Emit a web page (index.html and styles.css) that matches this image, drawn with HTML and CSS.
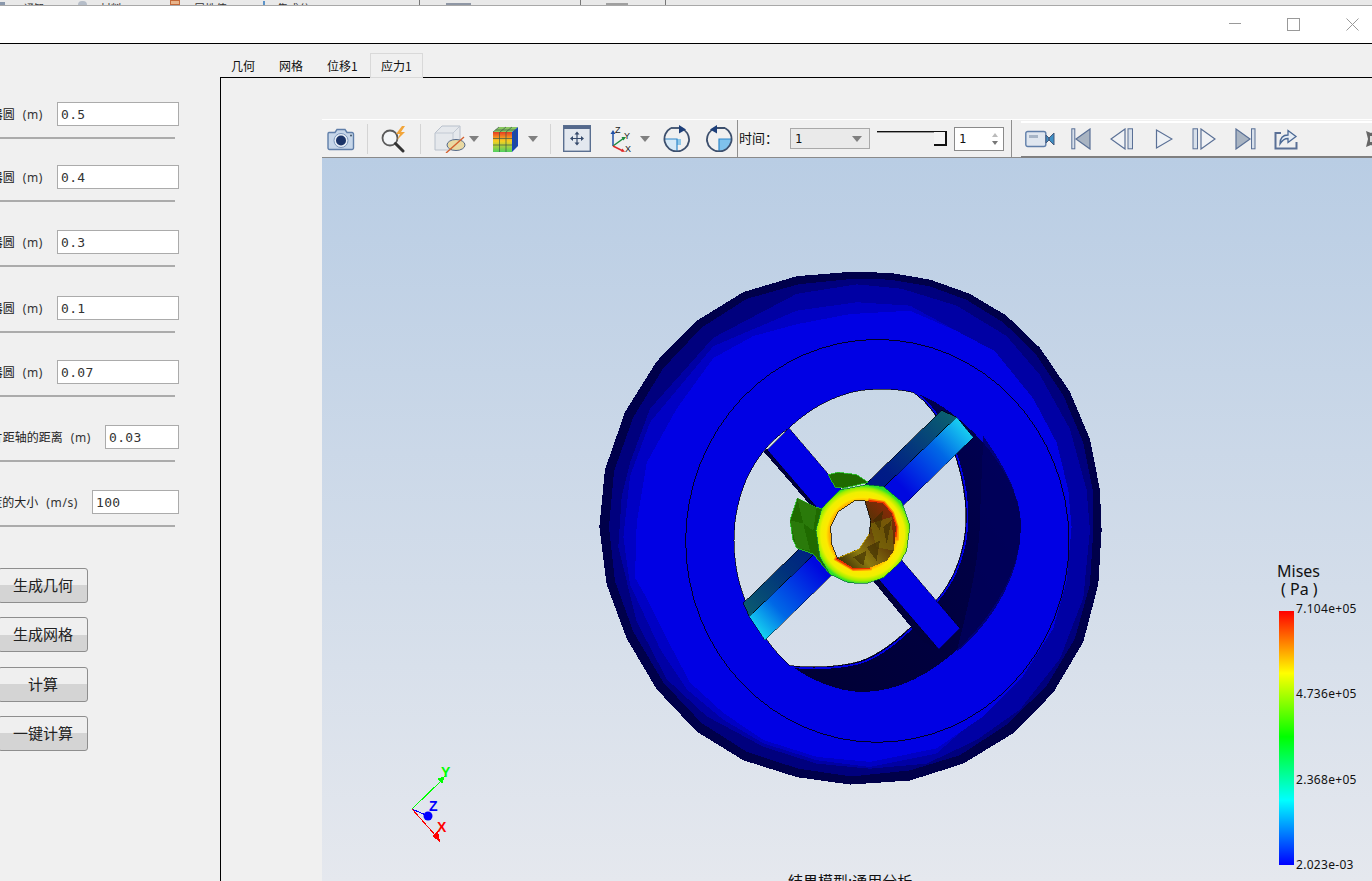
FILE: index.html
```html
<!DOCTYPE html>
<html lang="zh">
<head>
<meta charset="utf-8">
<title>应力</title>
<link rel="stylesheet" href="styles.css">
</head>
<body>
<div class="app">
  <div class="strip">
    <span class="sq sq-blue"></span><span class="cut c1">通知</span>
    <span class="dot"></span><span class="cut c2">材料</span>
    <span class="sq sq-orange"></span><span class="cut c3">属性值</span>
    <span class="tick"></span><span class="cut c4">集成分</span>
    <span class="vbar vb1"></span><span class="blk b1"></span>
    <span class="vbar vb2"></span><span class="blk b2"></span>
    <span class="vbar vb3"></span>
  </div>

  <header class="titlebar">
    <svg class="winbtn w-min" width="12" height="12" viewBox="0 0 12 12"><path d="M0 5.500H12" stroke="#999" stroke-width="1"/></svg>
    <svg class="winbtn w-max" width="13" height="13" viewBox="0 0 13 13"><rect x=".5" y=".5" width="12" height="12" fill="none" stroke="#999"/></svg>
    <svg class="winbtn w-close" width="13" height="13" viewBox="0 0 13 13"><path d="M.5.5L12.500 12.500M12.500.5L.5 12.500" stroke="#999" fill="none"/></svg>
  </header>

  <main class="main">
    <aside class="side">
      <div class="fields">
        <div class="field"><div class="frow"><span class="lbl">外器圆<span class="unit">(m)</span></span><div class="input in122">0.5</div></div><div class="rule"></div></div>
        <div class="field"><div class="frow"><span class="lbl">外器圆<span class="unit">(m)</span></span><div class="input in122">0.4</div></div><div class="rule"></div></div>
        <div class="field"><div class="frow"><span class="lbl">内器圆<span class="unit">(m)</span></span><div class="input in122">0.3</div></div><div class="rule"></div></div>
        <div class="field"><div class="frow"><span class="lbl">内器圆<span class="unit">(m)</span></span><div class="input in122">0.1</div></div><div class="rule"></div></div>
        <div class="field"><div class="frow"><span class="lbl">内器圆<span class="unit">(m)</span></span><div class="input in122">0.07</div></div><div class="rule"></div></div>
        <div class="field"><div class="frow"><span class="lbl">叶片距轴的距离<span class="unit">(m)</span></span><div class="input in74">0.03</div></div><div class="rule"></div></div>
        <div class="field"><div class="frow"><span class="lbl">速度的大小<span class="unit">(m/s)</span></span><div class="input in87">100</div></div><div class="rule"></div></div>
      </div>
      <div class="btns">
        <button class="btn">生成几何</button>
        <button class="btn">生成网格</button>
        <button class="btn">计算</button>
        <button class="btn">一键计算</button>
      </div>
    </aside>

    <section class="work">
      <nav class="tabs">
        <span class="tab t48">几何</span>
        <span class="tab t48">网格</span>
        <span class="tab t54">位移1</span>
        <span class="tab t53 active">应力1</span>
      </nav>
      <div class="pane">
        <div class="view">
          <div class="toolbar">
            <svg class="ic m5" width="28" height="26" viewBox="0 0 28 26"><path d="M2 6.500h6l2-3h8l2 3h5a1.500 1.500 0 0 1 1.500 1.500v14a1.500 1.500 0 0 1-1.500 1.500H2.500A1.500 1.500 0 0 1 1 22V8a1.500 1.500 0 0 1 1-1.500z" fill="#c6d6e9" stroke="#5f7ea9" stroke-width="1.400"/><circle cx="14" cy="14.500" r="7" fill="#e7eef6" stroke="#7d97bb"/><circle cx="14" cy="14.500" r="5" fill="#1b3468"/><circle cx="24" cy="9.500" r="1" fill="#456"/></svg>
            <span class="sep m12"></span>
            <svg class="ic m12" width="28" height="28" viewBox="0 0 28 28"><circle cx="10" cy="13" r="7.500" fill="#f4f6f8" stroke="#5b5b5b" stroke-width="1.800"/><path d="M15.500 18.500L23 26" stroke="#333" stroke-width="3" stroke-linecap="round"/><path d="M22 1l-6 8h4l-3 6 8-8h-4l4-6z" fill="#f2a53a"/></svg>
            <span class="sep m12"></span>
            <svg class="ic m12" width="33" height="28" viewBox="0 0 33 28"><path d="M2 8L9 1h18v17l-7 7H2z" fill="#e5e8ec" stroke="#b8c0cb"/><path d="M2 8h18v17M20 8l7-7" fill="none" stroke="#c2c9d3"/><ellipse cx="23" cy="20" rx="9" ry="5.500" fill="#e9d9a2" stroke="#54698a"/><path d="M13 28L31 12" stroke="#d4602e" stroke-width="1.400"/></svg>
            <svg class="ic arrow m3" width="10" height="6" viewBox="0 0 10 6"><path d="M0 0h10L5 6z" fill="#808080"/></svg>
            <svg class="ic m13" width="27" height="28" viewBox="0 0 27 28"><defs><linearGradient id="ru" x1="0" y1="0" x2="0" y2="1"><stop offset="0" stop-color="#e83a22"/><stop offset=".45" stop-color="#f8cf20"/><stop offset="1" stop-color="#4fd060"/></linearGradient></defs><path d="M1 7L7 2h19l-6 5z" fill="#8bc860"/><path d="M20 7l6-5v19l-6 6z" fill="#1746b8"/><rect x="1" y="7" width="19" height="20" fill="url(#ru)"/><path d="M7.500 7v20M14 7v20M1 13.500h19M1 20h19M7 2L1 7M14 2L8 7M20 2l-6 5M3.500 5h19M23 4v19" stroke="#3b5a4a" stroke-width=".7" fill="none"/></svg>
            <svg class="ic arrow m9" width="10" height="6" viewBox="0 0 10 6"><path d="M0 0h10L5 6z" fill="#808080"/></svg>
            <span class="sep m12"></span>
            <svg class="ic m12" width="28" height="27" viewBox="0 0 28 27"><rect x=".7" y=".7" width="26.600" height="25.600" fill="#e3e8ef" stroke="#5a6f90" stroke-width="1.400"/><rect x="1" y="1" width="26" height="3" fill="#55698c"/><path d="M14 8v11M8.500 13.500h11" stroke="#34496b" stroke-width="1.200"/><path d="M14 6.500l2.500 3h-5zM14 20.500l2.500-3h-5zM7 13.500l3-2.500v5zM21 13.500l-3-2.500v5z" fill="#34496b"/></svg>
            <svg class="ic m16" width="26" height="28" viewBox="0 0 26 28"><path d="M6 21V8" stroke="#2150a8" stroke-width="1.500"/><path d="M6 5l2.500 4h-5z" fill="#2150a8"/><path d="M6 21L17 13" stroke="#1d8a3c" stroke-width="1.500"/><path d="M19 12l-4.500 0 2 3.500z" fill="#1d8a3c"/><path d="M6 21l10 5" stroke="#e02a2a" stroke-width="1.500"/><path d="M18 27l-4-.5 1.500-3z" fill="#e02a2a"/><text x="8" y="8" class="axt">Z</text><text x="17" y="14" class="axt">Y</text><text x="18" y="27" class="axt">X</text></svg>
            <svg class="ic arrow m7" width="10" height="6" viewBox="0 0 10 6"><path d="M0 0h10L5 6z" fill="#808080"/></svg>
            <svg class="ic m13" width="28" height="27" viewBox="0 0 28 27"><path d="M2 14h12v12a12 12 0 0 1-12-12z" fill="#d5e9f7"/><path d="M14 14h4v6h-4z" fill="#8ec8ea"/><path d="M1.500 14h12.500v12.500" fill="none" stroke="#2e86c9" stroke-width="1.200"/><path d="M14 26.500A12.500 12.500 0 0 1 8 3M18 3a12.500 12.500 0 0 1 8 13A12.500 12.500 0 0 1 14 26.500" fill="none" stroke="#3c4f6d" stroke-width="1.800"/><path d="M8 3h9" stroke="#3c4f6d" stroke-width="1.800"/><path d="M16 0l7 4.500-7 4z" fill="#1d3f7a"/></svg>
            <svg class="ic m14" width="28" height="27" viewBox="0 0 28 27"><path d="M14 14h12a12 12 0 0 1-12 12z" fill="#7fc2ec"/><path d="M26.500 14H14v12.500" fill="none" stroke="#2e86c9" stroke-width="1.200"/><path d="M14 26.500A12.500 12.500 0 0 0 20 3M10 3A12.500 12.500 0 0 0 2 16 12.500 12.500 0 0 0 14 26.500M20 3h-9" fill="none" stroke="#3c4f6d" stroke-width="1.800"/><path d="M12 0L5 4.500l7 4z" fill="#1d3f7a"/></svg>
            <span class="sep dark m4"></span>
            <span class="time">时间：</span>
            <div class="combo"><span>1</span><svg width="10" height="6" viewBox="0 0 10 6"><path d="M0 0h10L5 6z" fill="#808080"/></svg></div>
            <div class="slider"><span class="grip"></span></div>
            <div class="spin"><span>1</span><span class="spbtns"><i class="up"></i><i class="dn"></i></span></div>
            <span class="sep dark m7 tall"></span>
            <div class="toolbar2">
              <svg class="ic" width="30" height="18" viewBox="0 0 30 18"><rect x=".8" y="1.500" width="20" height="15" rx="2" fill="#dfe6ef" stroke="#5f7ea9" stroke-width="1.400"/><rect x="4" y="5" width="9" height="3" fill="#a6b4c6"/><path d="M21 5l3 3v2l-3 3zM29 3v12l-5-5V8z" fill="#3f8fc4" stroke="#44597c"/></svg>
              <svg class="ic m16" width="20" height="22" viewBox="0 0 20 22"><rect x=".8" y=".8" width="3" height="20" fill="#d8e0ea" stroke="#5a7096"/><path d="M19 1v20L5 11z" fill="#a9b4c2" stroke="#5a7096" stroke-width="1.200"/></svg>
              <svg class="ic m19" width="24" height="22" viewBox="0 0 24 22"><path d="M15 1v20L1 11z" fill="#f0f2f5" stroke="#5a7096" stroke-width="1.200"/><rect x="18" y=".8" width="4.500" height="20" fill="#d8e0ea" stroke="#5a7096"/></svg>
              <svg class="ic m21" width="18" height="22" viewBox="0 0 18 22"><path d="M1.500 2v18L17 11z" fill="#eef1f5" stroke="#5a7096" stroke-width="1.200"/></svg>
              <svg class="ic m19" width="24" height="22" viewBox="0 0 24 22"><rect x="1" y=".8" width="4.500" height="20" fill="#d8e0ea" stroke="#5a7096"/><path d="M9 1v20l14-10z" fill="#f0f2f5" stroke="#5a7096" stroke-width="1.200"/></svg>
              <svg class="ic m19" width="21" height="22" viewBox="0 0 21 22"><path d="M1 1v20l14-10z" fill="#a9b4c2" stroke="#5a7096" stroke-width="1.200"/><rect x="16.500" y=".8" width="3.500" height="20" fill="#d8e0ea" stroke="#5a7096"/></svg>
              <svg class="ic m18" width="24" height="22" viewBox="0 0 24 22"><path d="M7 5H1.500v15.500h21V14" fill="none" stroke="#5a7096" stroke-width="2"/><path d="M6 16c0-6 3-9 8-9V2.500l8 6-8 6V10.500c-3 0-6 2-8 5.500z" fill="#e6edf5" stroke="#4c6a96" stroke-width="1.300"/></svg>
              <svg class="ic m65" width="12" height="20" viewBox="0 0 12 20"><path d="M3 2l5 2 4-2v16l-4-2-5 2 2-8z" fill="#666"/><path d="M7 7h5v6H7z" fill="#ddd"/></svg>
            </div>
          </div>
          <div class="canvas">
            <svg class="scene" width="1050" height="723" viewBox="322 158 1050 723">
              <defs>
                <linearGradient id="hole" x1="0" y1="0" x2="0" y2="1"><stop offset="0" stop-color="#c8d7e7"/><stop offset="1" stop-color="#d6deea"/></linearGradient>
                <linearGradient id="dk" x1="0" y1="1" x2="1" y2="0"><stop offset="0" stop-color="#000034"/><stop offset=".6" stop-color="#000044"/><stop offset="1" stop-color="#000058"/></linearGradient>
                <linearGradient id="sp1" gradientUnits="userSpaceOnUse" x1="500" y1="1090" x2="1125" y2="495"><stop offset="0" stop-color="#14cdf0"/><stop offset=".1" stop-color="#0068e6"/><stop offset=".3" stop-color="#0008e0"/><stop offset=".7" stop-color="#0008e0"/><stop offset=".88" stop-color="#0068e6"/><stop offset="1" stop-color="#18cdf0"/></linearGradient>
                <linearGradient id="sp2" gradientUnits="userSpaceOnUse" x1="470" y1="1035" x2="1075" y2="455"><stop offset="0" stop-color="#0a5a70"/><stop offset=".2" stop-color="#00307c"/><stop offset=".45" stop-color="#000c8c"/><stop offset=".7" stop-color="#001c86"/><stop offset="1" stop-color="#0a5f70"/></linearGradient>
                <radialGradient id="ringg" gradientUnits="userSpaceOnUse" cx="818" cy="812" r="146"><stop offset="0" stop-color="#f08000"/><stop offset=".68" stop-color="#ffb000"/><stop offset=".75" stop-color="#ffe800"/><stop offset=".86" stop-color="#eef000"/><stop offset=".94" stop-color="#a0f000"/><stop offset="1" stop-color="#2ce02c"/></radialGradient>
                <linearGradient id="innr" x1="1" y1="0" x2="0" y2="1"><stop offset="0" stop-color="#a02408"/><stop offset=".35" stop-color="#5a3206"/><stop offset=".7" stop-color="#8a7a10"/><stop offset="1" stop-color="#2a1c00"/></linearGradient>
                <linearGradient id="leg" x1="0" y1="0" x2="0" y2="1"><stop offset="0" stop-color="#ff0000"/><stop offset=".245" stop-color="#ffff00"/><stop offset=".495" stop-color="#00ff00"/><stop offset=".745" stop-color="#00ffff"/><stop offset="1" stop-color="#0000ff"/></linearGradient>
              </defs>

              <g transform="translate(590 260) scale(.3333 .338)">
                <polygon fill="#00004a" points="781,35 900,38 1020,58 1140,100 1250,165 1350,260 1440,390 1500,530 1530,680 1535,800 1525,960 1480,1130 1390,1280 1270,1400 1120,1490 960,1540 781,1552 620,1530 460,1480 320,1395 200,1270 110,1120 50,960 28,790 45,620 105,450 200,300 320,180 460,95 620,48"/>
                <polygon fill="#00007e" points="785,56 900,58 1020,78 1130,118 1240,185 1335,275 1420,400 1480,540 1510,690 1510,800 1500,960 1455,1120 1370,1260 1250,1375 1110,1465 960,1510 785,1528 625,1505 470,1455 335,1370 220,1250 130,1100 75,950 57,790 72,625 130,465 220,320 335,200 470,115 625,72"/>
                <polygon fill="#0000a4" points="620,100 800,72 935,85 1100,135 1250,225 1350,340 1440,500 1490,680 1500,800 1480,1000 1410,1180 1290,1330 1160,1420 1010,1490 840,1505 680,1490 520,1440 350,1350 230,1240 140,1070 85,850 95,700 120,600 180,440 370,230"/>
                <polygon fill="#0000c4" points="370,255 620,150 800,125 960,135 1100,210 1215,300 1330,450 1400,620 1420,790 1400,1000 1340,1150 1200,1320 1040,1460 840,1500 680,1480 520,1430 400,1360 290,1270 210,1150 120,960 100,820 120,640 180,480"/>
                <polygon fill="#0000e4" points="620,190 780,160 960,150 1100,210 1215,270 1330,410 1400,540 1435,680 1445,790 1430,950 1390,1090 1300,1230 1180,1350 1040,1445 840,1485 680,1470 520,1420 400,1340 300,1250 230,1120 170,1000 135,940 140,780 170,600 260,440 370,290 490,225"/>
                <ellipse cx="862" cy="831" rx="575" ry="596" fill="none" stroke="#000" stroke-width="2.500"/>

                <path fill="url(#dk)" d="M970 392C1100 430 1293 620 1293 790C1293 1000 1050 1278 820 1278C740 1278 660 1240 610 1205L800 1100z"/>
                <path d="M1180 520C1250 620 1293 700 1293 790C1293 920 1220 1060 1100 1160C1140 1000 1170 880 1170 760z" fill="#00005c" opacity=".8"/>
                <path fill="none" stroke="#0000e4" stroke-width="5" d="M975 392C1065 450 1133 620 1133 760C1133 860 1095 950 1045 1005C985 1078 885 1174 805 1194C765 1204 680 1214 605 1204"/>
                <path fill="url(#hole)" stroke="#000" stroke-width="2" d="M850 383C900 381 940 385 970 392C1060 450 1128 620 1128 760C1128 860 1090 950 1040 1005C980 1075 880 1170 800 1190C760 1200 680 1210 600 1200C520 1130 432 1000 432 830C432 680 500 560 597 497C670 430 760 385 850 383z"/>

                <polygon fill="#00003c" points="522,568 532,558 690,725 670,735"/>
                <polygon fill="#00003c" points="850,950 870,940 1047,1152 1000,1130"/>
                <polygon fill="#0000e4" stroke="#000" stroke-width="1.500" points="597,497 1110,1090 1047,1152 532,562"/>
                <polygon fill="url(#sp2)" stroke="#000" stroke-width="2" points="460,1015 1055,445 1100,465 478,1055"/>
                <polygon fill="url(#sp1)" stroke="#000" stroke-width="1.500" points="478,1055 1100,465 1150,525 525,1125"/>

                <polygon fill="#1f6a00" stroke="#28c428" stroke-width="2.500" points="715,635 745,628 800,635 835,658 760,675 735,672"/>
                <polygon fill="#1f6a00" stroke="#28c428" stroke-width="2.500" points="622,705 680,733 695,735 678,800 690,880 722,932 670,870 620,852 608,825 600,770"/>
                <path d="M622 705L680 733 670 800 640 780zM600 770L640 780 660 860 620 852z" fill="#2a7a0a"/>
                <polygon fill="url(#ringg)" stroke="#063" stroke-width="2" points="830,665 880,670 935,715 960,785 950,860 930,895 880,940 830,957 775,955 720,930 690,880 678,800 695,735 750,680"/>
                <polyline class="glow" fill="none" stroke="#ff9000" stroke-width="16" points="835,713 880,720 905,750 918,790 918,830"/>
                <polyline class="glow" fill="none" stroke="#ff9000" stroke-width="16" points="735,880 790,912 845,910"/>
                <polyline class="glow" fill="none" stroke="#e83000" stroke-width="8" points="835,713 880,720 905,750 918,790 916,820"/>
                <polyline class="glow" fill="none" stroke="#e83000" stroke-width="8" points="738,882 790,912 840,910"/>
                <polygon fill="url(#innr)" points="825,713 880,720 905,750 918,790 912,860 890,890 840,910 790,912 742,882 808,855 838,810 842,770"/>
                <path d="M840 780L905 760 912 860 860 850z" fill="#7b6a08" opacity=".7"/>
                <path d="M850 770L880 740 870 800zM880 790L905 770 890 840zM830 850L870 830 860 890zM790 880L830 860 820 905z" fill="#3a2a02" opacity=".6"/>
                <polygon fill="#cfdbe8" stroke="#000" stroke-width="2.200" points="793,713 825,713 842,770 838,810 808,855 742,882 725,840 722,790 745,745"/>
                <polyline fill="none" stroke="#ffd000" stroke-width="2" points="838,810 808,855 748,880"/>
              </g>

              <g class="triad">
                <path d="M412 809L443 779" stroke="#00ff00" fill="none"/>
                <path d="M445 776l-8 3 5 5z" fill="#00ff00"/>
                <path d="M412 809L428 816" stroke="#0000ff" fill="none"/>
                <circle cx="428" cy="816" r="4.500" fill="#0000ff"/>
                <path d="M412 809L436 836" stroke="#ff0000" fill="none"/>
                <path d="M440 842l-8-6 6-5z" fill="#ff0000"/>
                <text x="441" y="777" class="ax ay">Y</text>
                <text x="429" y="811" class="ax az">Z</text>
                <text x="437" y="832" class="ax ar">X</text>
              </g>

              <rect x="1279" y="611" width="15" height="254" fill="url(#leg)"/>
              <text x="1277" y="577" class="lg-t">Mises</text>
              <text x="1281" y="595" class="lg-t">( Pa )</text>
              <text x="1296" y="613" class="lg">7.104e+05</text>
              <text x="1296" y="698" class="lg">4.736e+05</text>
              <text x="1296" y="784" class="lg">2.368e+05</text>
              <text x="1296" y="869" class="lg">2.023e-03</text>
              <text x="788" y="887" class="sub">结果模型:通用分析</text>
            </svg>
          </div>
        </div>
      </div>
    </section>
  </main>
</div>
</body>
</html>
```
FILE: styles.css
```css
* { box-sizing: border-box; }
html, body { margin: 0; height: 100%; overflow: hidden; }
body { background: #f0f0f0; font-family: "Noto Sans CJK SC", "Noto Sans", sans-serif; color: #111; }
.app { width: 1372px; height: 881px; display: flex; flex-direction: column; overflow: hidden; }

/* clipped window behind */
.strip { height: 6px; background: #e9e9e9; border-bottom: 1px solid #a8a8a8; display: flex; align-items: flex-end; overflow: hidden; flex: none; }
.strip > * { flex: none; }
.cut { font-size: 11px; line-height: 12px; height: 12px; color: #333; margin-bottom: -9px; overflow: hidden; white-space: nowrap; }
.c1 { width: 21px; margin-left: 19px; font-size: 10px; }
.c2 { width: 27px; margin-left: 13px; }
.c3 { width: 38px; margin-left: 14px; }
.c4 { width: 35px; margin-left: 12px; }
.sq-blue { width: 5px; height: 3px; background: #8a98ac; }
.dot { width: 9px; height: 4px; margin-left: 33px; border-radius: 5px 5px 0 0; background: #b5bdc8; }
.sq-orange { width: 10px; height: 5px; margin-left: 43px; background: #e8b48a; border: 1px solid #c46a3a; }
.tick { width: 2px; height: 4px; margin-left: 31px; background: #5c93c8; }
.vbar { width: 1px; height: 5px; background: #777; }
.blk { height: 2px; background: #8f97a5; }
.vb1 { margin-left: 107px; }
.b1 { width: 25px; margin-left: 26px; }
.vb2 { margin-left: 109px; }
.b2 { width: 22px; margin-left: 25px; background: #a0a0a0; }
.vb3 { margin-left: 37px; }

.titlebar { height: 38px; background: #fff; border-bottom: 1px solid #000; display: flex; align-items: flex-start; flex: none; padding-top: 12px; }
.winbtn { flex: none; display: block; }
.w-min { margin-left: 1229px; }
.w-max { margin-left: 46px; }
.w-close { margin-left: 46px; }

.main { flex: 1; display: flex; min-height: 0; }

/* left form */
.side { width: 220px; flex: none; padding-top: 58px; overflow: hidden; }
.fields { display: grid; grid-template-columns: 179px; grid-template-rows: 63px 65px 66px 64px 65px 65px 65px; width: 179px; }
.field { display: flex; flex-direction: column; min-width: 0; }
.frow { display: flex; justify-content: flex-end; align-items: center; height: 24px; gap: 14px; white-space: nowrap; }
.lbl { font-size: 12px; line-height: 26px; color: #222; }
.unit { margin-left: 8px; font-family: "Noto Sans", sans-serif; letter-spacing: .6px; color: #333; }
.input { height: 24px; background: #fff; border: 1px solid #ababab; font: 13px/24px "DejaVu Sans Mono", monospace; letter-spacing: .3px; padding-left: 3px; flex: none; color: #333; }
.in122 { width: 122px; }
.in74 { width: 74px; }
.in87 { width: 87px; }
.rule { height: 2px; width: 175px; background: #ababab; margin-top: 11px; }
.btns { display: grid; grid-template-rows: 49px 50px 49px 35px; margin-top: 13px; }
.btn { width: 90px; height: 35px; margin-left: -2px; padding: 0 0 3px; border: 1px solid #8e8e8e; border-radius: 3px; background: linear-gradient(#efefef 0 50%, #d4d4d4 50% 100%); font: 15px/1 "Noto Sans CJK SC", sans-serif; color: #222; text-align: center; }

/* tabs */
.work { flex: 1; min-width: 0; padding-top: 9px; display: flex; flex-direction: column; }
.tabs { display: flex; height: 24px; flex: none; position: relative; z-index: 1; }
.tab { font-size: 12px; line-height: 26px; height: 24px; padding-left: 11px; color: #111; }
.t48 { width: 48px; }
.t54 { width: 54px; }
.t53 { width: 53px; }
.tab.active { background: #f0f0f0; border: 1px solid #d9d9d9; height: 25px; padding-left: 10px; line-height: 24px; }
.pane { flex: 1; min-height: 0; border: 1px solid #000; border-width: 1px 0 0 1px; padding: 41px 0 0 101px; overflow: hidden; }
.view { width: 1050px; display: flex; flex-direction: column; }

/* toolbar */
.toolbar { height: 39px; border-bottom: 1px solid #8a8a8a; border-top: 1px solid #fff; background: #f0f0f0; display: flex; align-items: center; flex: none; }
.toolbar svg.ic { display: block; flex: none; }
.sep { width: 1px; height: 30px; background: #d4d4d4; flex: none; }
.sep.dark { background: #8f8f8f; height: 37px; }
.sep.tall { height: 37px; }
.m3 { margin-left: 3px; }
.m4 { margin-left: 4px; }
.m5 { margin-left: 5px; }
.m7 { margin-left: 7px; }
.m9 { margin-left: 9px; }
.m12 { margin-left: 12px; }
.m13 { margin-left: 13px; }
.m14 { margin-left: 14px; }
.m16 { margin-left: 16px; }
.m18 { margin-left: 18px; }
.m19 { margin-left: 19px; }
.m21 { margin-left: 21px; }
.m65 { margin-left: 65px; }
.axt { font: 9px "Liberation Sans", sans-serif; fill: #222; }
.time { width: 52px; flex: none; font-size: 13px; padding: 0 0 2px 1px; color: #111; }
.combo { width: 80px; height: 21px; flex: none; border: 1px solid #a9a9a9; background: #eaeaea; display: flex; align-items: center; justify-content: space-between; padding: 0 7px 0 4px; font: 12px "DejaVu Sans Mono", monospace; }
.slider { width: 70px; height: 15px; margin-left: 7px; flex: none; border-top: 1px solid #111; box-shadow: inset 0 1px 0 #999; display: flex; justify-content: flex-end; }
.grip { width: 13px; height: 14px; background: #f4f4f4; border-right: 2px solid #111; border-bottom: 2px solid #111; }
.spin { width: 50px; height: 24px; margin-left: 7px; flex: none; background: #fff; border: 1px solid #8a8a8a; display: flex; align-items: center; justify-content: space-between; padding: 0 5px 0 4px; font: 12px "DejaVu Sans Mono", monospace; }
.spbtns { display: flex; flex-direction: column; gap: 4px; }
.spbtns i { display: block; width: 0; height: 0; border-left: 3px solid transparent; border-right: 3px solid transparent; }
.up { border-bottom: 4px solid #bbb; }
.dn { border-top: 4px solid #777; }
.toolbar2 { width: 351px; height: 37px; flex: none; margin-left: 9px; background: #f0f0f0; border-top: 2px solid #fff; border-bottom: 2px solid #7f7f7f; display: flex; align-items: center; padding-left: 4px; margin-top: 1px; overflow: hidden; }

/* 3D canvas */
.canvas { height: 723px; flex: none; background: linear-gradient(#b9cde4, #e5e8ee); }
.scene { display: block; }
.scene polygon, .scene path, .scene polyline, .scene ellipse { shape-rendering: crispEdges; }
.scene .glow { shape-rendering: auto; stroke-linejoin: round; }
.ax { font: bold 14px "Liberation Sans", sans-serif; }
.ay { fill: #00ff00; }
.az { fill: #0000ff; }
.ar { fill: #ff0000; }
.lg-t { font: 16px "Noto Sans", sans-serif; fill: #111; }
.lg { font: 12px "Noto Sans", sans-serif; letter-spacing: .3px; fill: #111; }
.sub { font: 15px "Noto Sans CJK SC", sans-serif; fill: #111; }
```
